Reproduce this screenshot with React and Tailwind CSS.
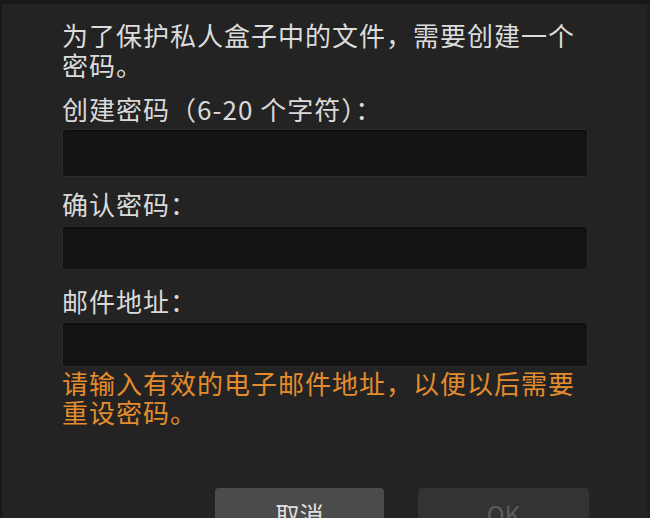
import React from 'react';

const font = { fontFamily: '"Noto Sans CJK SC", "Liberation Sans", sans-serif' };

function Field({ label, h, labelMt, inputMt }) {
    return (
        <div>
            <div className={`text-[#d9d9d9] text-[26px] leading-[30px] tracking-[1px] ${labelMt}`}>{label}</div>
            <div className={`${inputMt} ${h} w-[526px] rounded-[4px] bg-[#141414] border border-[#2b2b2b] shadow-[inset_0_1px_2px_rgba(0,0,0,0.6)]`}></div>
        </div>
    );
}

export default function App() {
    return (
        <div className="w-[650px] h-[518px] overflow-hidden bg-[#181818] pt-[4px] pl-[2px]" style={font}>
            <div className="w-full h-full bg-[#232323] border-r-[3px] border-[#1e1e1e] pl-[60px] pt-[16px]">
                {/* intro text */}
                <p className="text-[#dcdcdc] text-[26px] leading-[30px] w-[530px] tracking-[1px]">
                    为了保护私人盒子中的文件，需要创建一个密码。
                </p>

                <Field label="创建密码（6-20 个字符）：" labelMt="mt-[14px]" inputMt="mt-[5px]" h="h-[48px]" />
                <Field label="确认密码：" labelMt="mt-[12px]" inputMt="mt-[7px]" h="h-[44px]" />
                <Field label="邮件地址：" labelMt="mt-[16px]" inputMt="mt-[6px]" h="h-[45px]" />

                <p className="text-[#e58c2c] text-[26px] leading-[29px] w-[530px] tracking-[1px] mt-[1px]">
                    请输入有效的电子邮件地址，以便以后需要重设密码。
                </p>

                <div className="flex gap-[34px] pl-[153px] mt-[62px]">
                    <button className="w-[169px] h-[44px] rounded-[4px] bg-[#4b4b4b] text-[#e0e0e0] text-[24px] pt-[8px]">取消</button>
                    <button className="w-[171px] h-[44px] rounded-[4px] bg-[#333333] text-[#5c5c5c] text-[24px] pt-[8px]">OK</button>
                </div>
            </div>
        </div>
    );
}
